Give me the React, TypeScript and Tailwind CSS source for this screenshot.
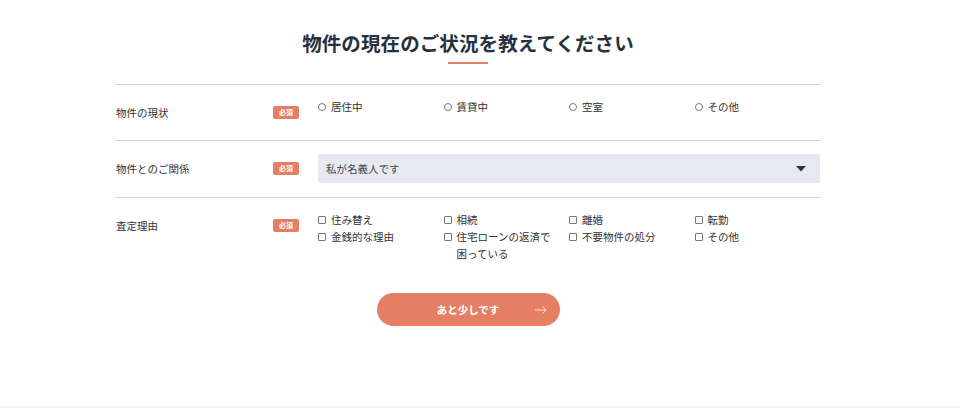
const statusOptions = ["居住中", "賃貸中", "空室", "その他"];
const reasonOptions = [
  "住み替え",
  "相続",
  "離婚",
  "転勤",
  "金銭的な理由",
  "住宅ローンの返済で困っている",
  "不要物件の処分",
  "その他",
];

function Required() {
  return (
    <span className="inline-flex h-[13px] w-[26px] items-center justify-center rounded-[2px] bg-[#e47f64] text-[7px] font-bold leading-none text-white">
      必須
    </span>
  );
}

function Row({
  label,
  children,
  className,
}: {
  label: string;
  children: React.ReactNode;
  className: string;
}) {
  return (
    <div className={"flex items-start pt-[13px] " + className}>
      <div className="flex h-[29px] w-[157px] items-center pt-[1px] text-[10.5px] text-[#333]">
        {label}
      </div>
      <div className="flex h-[29px] w-[45px] items-center pb-[1px]">
        <Required />
      </div>
      <div className="flex-1">{children}</div>
    </div>
  );
}

export default function App() {
  return (
    <div
      className="flex h-[408px] w-full flex-col bg-white"
      style={{ fontFamily: '"Noto Sans CJK JP", "Noto Sans", sans-serif' }}
    >
      <div className="flex-1">
        <div className="ml-[116px] w-[704px] pt-[29px]">
          <h1 className="text-center text-[19.5px] font-bold leading-[28px] tracking-[0.1px] text-[#263140]">
            物件の現在のご状況を教えてください
          </h1>
          <div className="mx-auto mt-[5px] h-[2px] w-[40px] bg-[#e47f64]" />

          <div className="mt-[20px] border-t border-[#d4d4d4]">
            <Row label="物件の現状" className="border-b border-[#d4d4d4] pb-[13px]">
              <div className="grid grid-cols-4">
                {statusOptions.map((o) => (
                  <label
                    key={o}
                    className="flex items-center gap-[5px] text-[10.5px] leading-[17px] text-[#333]"
                  >
                    <span className="h-[8px] w-[8px] shrink-0 rounded-full border border-[#777]" />
                    {o}
                  </label>
                ))}
              </div>
            </Row>

            <Row label="物件とのご関係" className="border-b border-[#d4d4d4] pb-[14px]">
              <div className="flex h-[29px] items-center justify-between rounded-[2px] bg-[#e6e9ef] pl-[8px] pr-[14px] text-[10.5px] text-[#444]">
                <span>私が名義人です</span>
                <svg width="10" height="6" viewBox="0 0 10 6">
                  <path d="M0 0 H10 L5 5.5 Z" fill="#333" />
                </svg>
              </div>
            </Row>

            <Row label="査定理由" className="pb-[14px]">
              <div className="grid grid-cols-4">
                {reasonOptions.map((o, i) => (
                  <label
                    key={i}
                    className="flex items-start gap-[5px] pr-[16px] text-[10.5px] leading-[17px] text-[#333]"
                  >
                    <span className="mt-[4.5px] h-[8px] w-[8px] shrink-0 rounded-[1px] border border-[#777]" />
                    <span>{o}</span>
                  </label>
                ))}
              </div>
            </Row>
          </div>

          <div className="mt-[17px] flex justify-center">
            <button className="relative flex h-[33px] w-[183px] items-center justify-center rounded-full bg-[#e47f64] text-[10.5px] font-bold text-white">
              あと少しです
              <svg
                className="absolute right-[13px] top-1/2 -translate-y-1/2"
                width="12"
                height="8"
                viewBox="0 0 12 8"
                fill="none"
                stroke="#fbe3db"
                strokeWidth="1"
              >
                <path d="M0 4 H11 M7.5 0.5 L11 4 L7.5 7.5" />
              </svg>
            </button>
          </div>
        </div>
      </div>
      <div className="h-[2px] bg-[#f3f3f3]" />
    </div>
  );
}
